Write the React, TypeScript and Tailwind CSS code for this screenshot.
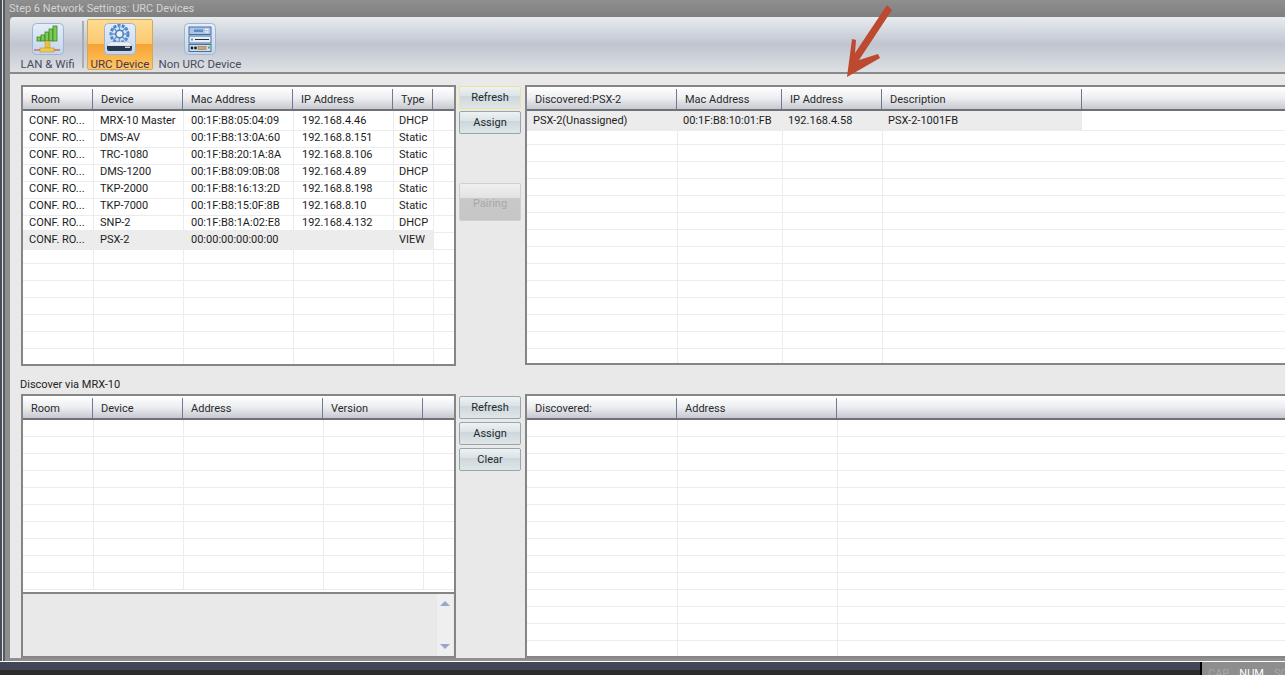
const font = "font-['Roboto',Arial,sans-serif]"

type TableProps = {
  cols: string
  heads: string[]
  rows: string[][]
  total: number
  selected?: number
  pads?: string[]
  openEnd?: boolean
  className: string
}

const Table = ({ cols, heads, rows, total, selected, pads, openEnd, className }: TableProps) => {
  const blanks = Array.from({ length: total - rows.length }, () => heads.map(() => ''))
  return (
    <div className={`overflow-hidden border-2 border-r-0 border-[#858585] bg-white ${className}`}>
      <div className={`grid h-[24px] border-b-2 border-[#6f7176] bg-gradient-to-b from-white via-[#eceef1] to-[#c6c9d0] pt-[1px] text-[#2a2a2a] ${cols}`}>
        {heads.map((h) => (
          <div key={h} className="my-[1px] flex items-center border-r border-[#74778f] pl-[8px] pt-[3px]">
            {h}
          </div>
        ))}
      </div>
      {[...rows, ...blanks].map((row, i) => (
        <div key={i} className={`grid h-[17px] ${cols}`}>
          {row.map((cell, j) => (
            <div
              key={j}
              className={`flex items-center whitespace-nowrap border-b border-[#ececec] pt-[2px] text-[#1c1c1c] ${j > 0 ? 'border-l' : ''} ${pads ? pads[j] : j > 0 ? 'pl-[5px]' : 'pl-[6px]'} ${i === selected ? 'bg-[#ececec]' : ''}`}
            >
              {cell}
            </div>
          ))}
          <div className={`border-b border-[#ececec] ${openEnd ? '' : 'border-l'}`} />
        </div>
      ))}
    </div>
  )
}

const Btn = ({ label, hot }: { label: string; hot?: boolean }) => (
  <div
    className={`flex h-[23px] items-center justify-center rounded-[2px] border bg-[linear-gradient(#eef2f3,#d9e2e5_45%,#cdd7db_45%,#dfe6e8)] pt-[2px] text-[#1d2a30] ${hot ? 'border-[#efe29a]' : 'border-[#97a5ad]'}`}
  >
    {label}
  </div>
)

const Tile = ({ children }: { children: React.ReactNode }) => (
  <svg className="shrink-0" width="32" height="32" viewBox="0 0 32 32">
    <defs>
      <linearGradient id="tile" x1="0" y1="0" x2="0" y2="1">
        <stop offset="0" stopColor="#e6eef8" />
        <stop offset="1" stopColor="#c3d5ea" />
      </linearGradient>
    </defs>
    <rect x="0.5" y="0.5" width="31" height="31" rx="4" fill="url(#tile)" stroke="#9db4d4" />
    {children}
  </svg>
)

const LanIcon = () => (
  <Tile>
    <rect x="5" y="14" width="4" height="4" fill="#7ccb52" stroke="#2f7a22" strokeWidth="0.7" />
    <rect x="9" y="12" width="4" height="6" fill="#7ccb52" stroke="#2f7a22" strokeWidth="0.7" />
    <rect x="13" y="9" width="4" height="9" fill="#7ccb52" stroke="#2f7a22" strokeWidth="0.7" />
    <rect x="17" y="6" width="4" height="12" fill="#7ccb52" stroke="#2f7a22" strokeWidth="0.7" />
    <rect x="21" y="3" width="4" height="15" fill="#7ccb52" stroke="#2f7a22" strokeWidth="0.7" />
    <rect x="13" y="18" width="5" height="7" fill="#e6c04a" stroke="#b08c25" strokeWidth="0.4" />
    <rect x="8" y="25" width="14" height="4" fill="#eccb55" stroke="#b08c25" strokeWidth="0.5" />
    <path d="M2 27h6M22 27h6" stroke="#d9342b" strokeWidth="1.2" />
  </Tile>
)

const UrcIcon = () => (
  <Tile>
    <circle cx="15.5" cy="11" r="8.5" fill="none" stroke="#4f86c8" strokeWidth="3" strokeDasharray="3 1.2" />
    <path d="M15.5 2v18M6.5 11h18M9.1 4.6l12.8 12.8M21.9 4.6 9.1 17.4" stroke="#6a9ad2" strokeWidth="1.4" />
    <circle cx="15.5" cy="11" r="3.8" fill="#e8f0f8" stroke="#4f80bd" strokeWidth="1.6" />
    <path d="M6 19h19l3 3v1H3v-1z" fill="#e8eef4" stroke="#9fb0c4" strokeWidth="0.5" />
    <path d="M3 23h25v3q0 2-2 2H5q-2 0-2-2z" fill="#27374d" />
    <rect x="21" y="23.5" width="5" height="1.5" fill="#c9d6e2" />
  </Tile>
)

const RackIcon = () => (
  <Tile>
    <rect x="5" y="4" width="22" height="7.5" fill="#a9c6e6" stroke="#4a6f9c" />
    <rect x="10" y="6.5" width="9" height="2.5" fill="#5f8ec4" />
    <rect x="21" y="5.8" width="3.5" height="1" fill="#fff" />
    <rect x="21" y="8.5" width="3.5" height="1" fill="#fff" />
    <rect x="5" y="13" width="22" height="7" fill="#e6eef7" stroke="#4a6f9c" />
    <rect x="7" y="15.5" width="2" height="2" fill="#6d93c0" />
    <path d="M11 16.5h14" stroke="#1c2c44" strokeWidth="1" />
    <rect x="5" y="21.5" width="22" height="7" fill="#cddcec" stroke="#4a6f9c" />
    <circle cx="8" cy="25" r="1.4" fill="#1c1c1c" />
    <circle cx="11.5" cy="25" r="1.4" fill="#1c1c1c" />
    <rect x="14" y="23.5" width="8" height="3" fill="#d2a668" stroke="#8a6a38" strokeWidth="0.5" />
    <rect x="24" y="23.5" width="2" height="2" fill="#4cbb3f" />
  </Tile>
)

const leftRows = [
  ['CONF. RO...', 'MRX-10 Master', '00:1F:B8:05:04:09', '192.168.4.46', 'DHCP'],
  ['CONF. RO...', 'DMS-AV', '00:1F:B8:13:0A:60', '192.168.8.151', 'Static'],
  ['CONF. RO...', 'TRC-1080', '00:1F:B8:20:1A:8A', '192.168.8.106', 'Static'],
  ['CONF. RO...', 'DMS-1200', '00:1F:B8:09:0B:08', '192.168.4.89', 'DHCP'],
  ['CONF. RO...', 'TKP-2000', '00:1F:B8:16:13:2D', '192.168.8.198', 'Static'],
  ['CONF. RO...', 'TKP-7000', '00:1F:B8:15:0F:8B', '192.168.8.10', 'Static'],
  ['CONF. RO...', 'SNP-2', '00:1F:B8:1A:02:E8', '192.168.4.132', 'DHCP'],
  ['CONF. RO...', 'PSX-2', '00:00:00:00:00:00', '', 'VIEW'],
]

const App = () => {
  return (
    <div className={`relative flex h-[675px] w-[1285px] flex-col overflow-hidden bg-[#2b2b2b] text-[11px] ${font}`}>
      <div className="flex h-[662px] border-b border-white bg-[#8d8d8d]">
        <div className="flex w-[10px] shrink-0">
          <div className="w-[2px] bg-[#4a4f55]" />
          <div className="w-[1px] bg-[#dfe6ea]" />
          <div className="w-[2px] bg-[#555a60]" />
          <div className="w-[5px] bg-[#8d8d8d]" />
        </div>
        <div className="flex min-w-0 flex-1 flex-col">
          <div className="flex h-[17px] items-center bg-gradient-to-b from-[#8f8f8f] to-[#7f7f7f] pt-[2px] text-[#d4d4d4]">
            <span className="-ml-[1px]">Step 6 Network Settings: URC Devices</span>
          </div>
          <div className="flex h-[57px] items-stretch rounded-tl-[4px] border-b-2 border-[#8a8a8a] bg-gradient-to-b from-[#e8ecef] via-[#c0c5d0] to-[#dde1e4] pl-[5px] text-[11.5px] leading-[13px] text-[#4b4b5c]">
            <div className="flex w-[65px] flex-col items-center pt-[6px]">
              <LanIcon />
              <span className="mt-[3px] whitespace-nowrap">LAN &amp; Wifi</span>
            </div>
            <div className="mx-[2px] my-[4px] w-[2px] bg-[#a9adb5]" />
            <div className="my-[2px] ml-[1px] flex w-[66px] flex-col items-center rounded-[2px] border border-[#d0a860] bg-[linear-gradient(#fddc90,#fdc870_50%,#f9a234_50%,#fdc862)] pt-[3px] text-[#4d3350]">
              <UrcIcon />
              <span className="mt-[3px] whitespace-nowrap">URC Device</span>
            </div>
            <div className="ml-[5px] flex w-[84px] flex-col items-center pt-[6px]">
              <RackIcon />
              <span className="mt-[3px] whitespace-nowrap">Non URC Device</span>
            </div>
          </div>
          <div className="flex min-h-0 flex-1 gap-[3px] overflow-hidden bg-[#e9e9e9] pl-[11px] pt-[11px]">
            <div className="flex w-[435px] shrink-0 flex-col">
              <Table
                className="h-[281px] border-r-2"
                cols="grid-cols-[70px_90px_110px_100px_40px_1fr]"
                heads={['Room', 'Device', 'Mac Address', 'IP Address', 'Type']}
                rows={leftRows}
                total={15}
                selected={7}
                pads={['pl-[6px]', 'pl-[6px]', 'pl-[7px]', 'pl-[8px]', 'pl-[5px]']}
              />
              <div className="flex h-[29px] items-center pt-[10px] text-[#222]">
                <span className="-ml-[1px]">Discover via MRX-10</span>
              </div>
              <Table
                className="h-[198px] border-b-0 border-r-2"
                cols="grid-cols-[70px_90px_140px_100px_1fr]"
                heads={['Room', 'Device', 'Address', 'Version']}
                rows={[]}
                total={10}
              />
              <div className="flex h-[66px] justify-end border-2 border-[#858585] bg-[#e9e9e9] pr-[1px]">
                <div className="flex w-[16px] flex-col items-center justify-between bg-[#efefef] py-[7px]">
                  <div className="h-0 w-0 border-x-[5px] border-b-[5px] border-x-transparent border-b-[#9aa6c8]" />
                  <div className="h-0 w-0 border-x-[5px] border-t-[5px] border-x-transparent border-t-[#9aa6c8]" />
                </div>
              </div>
            </div>
            <div className="flex w-[62px] shrink-0 flex-col pt-[1px]">
              <div className="h-[299px]">
                <Btn label="Refresh" hot />
                <div className="mt-[2px]">
                  <Btn label="Assign" />
                </div>
                <div className="mt-[49px] flex h-[38px] items-center justify-center rounded-[2px] border border-[#d0d0d0] bg-[linear-gradient(#f0f0f0,#e2e2e2_40%,#c9c9c9_40%,#c6c6c6)] pt-[5px] text-[#a8a8a8]">
                  Pairing
                </div>
              </div>
              <div className="mt-[11px] flex flex-col gap-[3px]">
                <Btn label="Refresh" />
                <Btn label="Assign" />
                <Btn label="Clear" />
              </div>
            </div>
            <div className="flex w-[770px] shrink-0 flex-col pl-[1px]">
              <Table
                className="h-[281px]"
                cols="grid-cols-[150px_105px_100px_200px_1fr]"
                heads={['Discovered:PSX-2', 'Mac Address', 'IP Address', 'Description']}
                rows={[['PSX-2(Unassigned)', '00:1F:B8:10:01:FB', '192.168.4.58', 'PSX-2-1001FB']]}
                total={15}
                selected={0}
                openEnd
              />
              <Table
                className="mt-[29px] h-[264px]"
                cols="grid-cols-[150px_160px_1fr]"
                heads={['Discovered:', 'Address']}
                rows={[]}
                total={14}
              />
            </div>
          </div>
          <div className="h-[3px] bg-[#8f8f8f]" />
        </div>
      </div>
      <div className="flex h-[13px] bg-gradient-to-b from-[#434654] from-60% to-[#2b2b2b] to-60%">
        <div className="flex-1" />
        <div className="flex w-[85px] gap-[10px] overflow-hidden border-l-2 border-black bg-[#8e8e8e] pl-[6px] pt-[4px]">
          <span className="text-[#a8a8a8]">CAP</span>
          <span className="text-white">NUM</span>
          <span className="text-[#a8a8a8]">SCRL</span>
        </div>
      </div>
      {/* red annotation arrow over the ribbon */}
      <svg className="absolute left-[840px] top-0" width="60" height="85" viewBox="840 0 60 85">
        <path d="M887 5 892 10 859 60 878 54 880 58 847 77 852 39 856 40 855 53z" fill="#bd4a30" />
      </svg>
    </div>
  )
}

export default App
